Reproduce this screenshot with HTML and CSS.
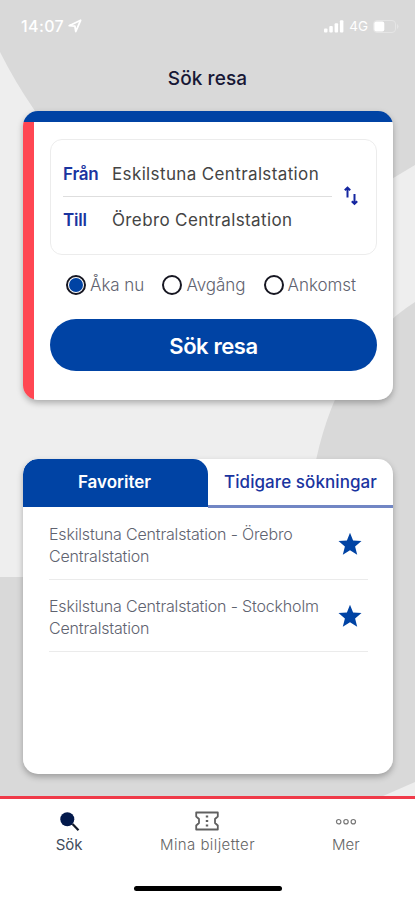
FILE: index.html
```html
<!DOCTYPE html>
<html lang="sv">
<head>
<meta charset="utf-8">
<title>Sök resa</title>
<link rel="stylesheet" href="styles.css">
</head>
<body>
<div class="app">
  <svg class="backdrop" viewBox="0 0 415 900" aria-hidden="true">
    <path d="M0 0H415V165L380 186L200 200L90 200L35 111Q15 82 0 52Z"/>
    <path d="M415 302Q340 350 316 460L260 577H0V800H374L415 782Z"/>
  </svg>
  <header class="status">
    <span class="clock">14:07</span>
    <svg class="location" viewBox="0 0 14 14"><path d="M1.2 6.7 12.6 1.3 7.8 12.5 6.9 7.2Z"/></svg>
    <svg class="signal" viewBox="0 0 20 13"><rect y="8.5" width="3.5" height="4" rx="1"/><rect x="5.3" y="6" width="3.5" height="6.5" rx="1"/><rect x="10.6" y="3.3" width="3.5" height="9.2" rx="1"/><rect x="15.9" y="0.3" width="3.5" height="12.2" rx="1"/></svg>
    <span class="network">4G</span>
    <svg class="battery" viewBox="0 0 26 13"><rect class="shell" x="0.5" y="0.5" width="22" height="12" rx="3.5"/><path class="cap" d="M24 4Q27 6.5 24 9Z"/><rect x="1.3" y="1.6" width="10" height="9.8" rx="2"/></svg>
  </header>
  <h1 class="title">Sök resa</h1>
  <main class="content">
    <section class="card search">
      <div class="search-body">
        <div class="stations">
          <div class="fields">
            <div class="field"><span class="field-label">Från</span><span class="field-value">Eskilstuna Centralstation</span></div>
            <div class="field"><span class="field-label">Till</span><span class="field-value">Örebro Centralstation</span></div>
          </div>
          <svg class="swap" viewBox="0 0 16 20"><path d="M4.5 11.5V2M1.8 4.3 4.5 1.6 7.2 4.3M11.5 8V17.5M8.8 15.2 11.5 17.9 14.2 15.2"/></svg>
        </div>
        <div class="times">
          <span class="time"><i class="radio checked"></i><span>Åka nu</span></span>
          <span class="time"><i class="radio"></i><span>Avgång</span></span>
          <span class="time"><i class="radio"></i><span>Ankomst</span></span>
        </div>
        <button class="submit">Sök resa</button>
      </div>
    </section>
    <section class="card saved">
      <div class="tabs">
        <div class="tab active">Favoriter</div>
        <div class="tab">Tidigare sökningar</div>
      </div>
      <ul class="routes">
        <li><span class="route">Eskilstuna Centralstation - Örebro<br>Centralstation</span><svg class="star" viewBox="0 0 24 24"><path d="M12 .8 15.1 8.5 23.5 9 17.1 14.4 19.2 22.8 12 18.2 4.8 22.8 6.9 14.4.5 9 8.9 8.5Z"/></svg></li>
        <li><span class="route">Eskilstuna Centralstation - Stockholm<br>Centralstation</span><svg class="star" viewBox="0 0 24 24"><path d="M12 .8 15.1 8.5 23.5 9 17.1 14.4 19.2 22.8 12 18.2 4.8 22.8 6.9 14.4.5 9 8.9 8.5Z"/></svg></li>
      </ul>
    </section>
  </main>
  <nav class="nav">
    <div class="nav-items">
      <div class="nav-item current"><svg viewBox="0 0 24 22"><circle cx="10.3" cy="9.2" r="7" fill="#03194b"/><path d="M15.5 14 21.5 20.3" stroke="#111827" stroke-width="2.2"/></svg><span>Sök</span></div>
      <div class="nav-item tickets"><svg viewBox="0 0 24 22"><path d="M1.2 2.5H22.8V6.5L20 9V13L22.8 15.5V19.5H1.2V15.5L4 13V9L1.2 6.5Z" fill="none" stroke="#606060" stroke-width="1.8" stroke-linejoin="round"/><path d="M12 5.5V7.5M12 10V12M12 14.5V16.5" stroke="#606060" stroke-width="2.4"/></svg><span>Mina biljetter</span></div>
      <div class="nav-item"><svg viewBox="0 0 24 22" fill="none" stroke="#777" stroke-width="1.2"><circle cx="4.7" cy="11.7" r="2.2"/><circle cx="12" cy="11.7" r="2.2"/><circle cx="19.3" cy="11.7" r="2.2"/></svg><span>Mer</span></div>
    </div>
    <div class="home"></div>
  </nav>
</div>
</body>
</html>
```
FILE: styles.css
```css
* { box-sizing: border-box; }
body { margin: 0; font-family: Inter, "Liberation Sans", sans-serif; }
.app { position: relative; isolation: isolate; display: flex; flex-direction: column; width: 415px; height: 900px; overflow: hidden; background: #eeeeee; }
.backdrop { position: absolute; inset: 0; z-index: -1; fill: #d9d9d9; }
.status { display: flex; align-items: center; height: 52px; padding: 0 16px 0 21px; color: #fff; fill: #fff; }
.clock { font-size: 16px; font-weight: 500; letter-spacing: .4px; }
.location { width: 14px; height: 14px; margin-left: 4px; fill: none; stroke: #fff; stroke-width: 1.8; stroke-linejoin: round; }
.signal { width: 20px; height: 13px; margin-left: auto; }
.network { margin: 0 5px; font-size: 13.5px; font-weight: 400; }
.battery { width: 26px; height: 13px; }
.shell { fill: none; stroke: #e5e5e5; }
.cap { fill: #e5e5e5; }
.title { margin: 0; height: 59px; line-height: 53px; text-align: center; font-size: 19px; font-weight: 500; letter-spacing: .1px; color: #171735; }
.content { display: flex; flex-direction: column; gap: 59px; height: 685px; padding: 0 22px 0 23px; }
.card { overflow: hidden; border-radius: 15px; background: #fff; box-shadow: 0 3px 6px rgba(0,0,0,.28); }
.search { height: 289px; background: linear-gradient(#0043a4, #0043a4) 0 0 / 100% 11px no-repeat, linear-gradient(90deg, #ff4753 11px, #fff 11px); }
.search-body { padding: 28px 16px 0 27px; }
.stations { display: flex; justify-content: space-between; height: 116px; padding: 12px 17px 0 12px; border: 1px solid #ececec; border-radius: 12px; }
.fields { width: 269px; }
.field { display: flex; align-items: center; height: 45px; }
.field:first-child { border-bottom: 1px solid #dedede; }
.field-label { width: 49px; font-size: 17px; font-weight: 600; letter-spacing: -.2px; color: #1a34a0; }
.field-value { font-size: 17px; letter-spacing: .37px; color: #444; }
.swap { width: 16px; height: 20px; margin-top: 34px; fill: none; stroke: #1526a0; stroke-width: 2; }
.times { display: flex; height: 64px; padding: 0 21px 4px 16px; align-items: center; justify-content: space-between; }
.time { display: flex; align-items: center; gap: 4px; font-size: 17px; font-weight: 300; letter-spacing: -.05px; color: #5f6370; }
.radio { width: 20px; height: 20px; border: 2px solid #171722; border-radius: 50%; }
.checked { padding: 1px; background: #0043a4 content-box; }
.submit { display: block; width: 327px; height: 52px; padding: 1px 0 0; border: 0; border-radius: 26px; background: #0043a4; color: #fff; font: 600 22px Inter, sans-serif; letter-spacing: -.4px; }
.saved { height: 315px; }
.tabs { display: flex; height: 49px; }
.tab { display: flex; align-items: center; justify-content: center; width: 185px; padding-bottom: 1px; border-bottom: 3px solid #7186c4; font-size: 17px; font-weight: 500; letter-spacing: .08px; color: #1a34a0; white-space: nowrap; }
.active { height: 48px; padding: 0 2px 2px 0; border-bottom: 0; border-radius: 15px 15px 0 0; background: #0043a4; color: #fff; font-weight: 600; letter-spacing: 0; }
.routes { margin: 0; padding: 0 25px 0 26px; list-style: none; }
.routes li { display: flex; justify-content: space-between; height: 72px; padding: 15px 6px 0 0; border-bottom: 1px solid #ebebeb; }
.route { font-size: 16px; line-height: 22px; font-weight: 300; letter-spacing: -.17px; color: #5f6370; white-space: nowrap; }
.star { width: 24px; height: 24px; margin-top: 9px; fill: #0043a4; }
.nav { height: 104px; border-top: 3px solid #f03a49; background: #fff; }
.nav-items { display: grid; grid-template-columns: repeat(3, 1fr); height: 87px; padding-top: 11px; }
.nav-item { display: flex; flex-direction: column; align-items: center; gap: 2px; font-size: 15px; line-height: 22px; font-weight: 300; color: #666; }
.nav-item svg { width: 24px; height: 22px; }
.tickets { letter-spacing: .42px; }
.current { color: #414c5c; font-weight: 400; }
.home { width: 148px; height: 5px; margin: 0 auto; border-radius: 3px; background: #000; }
```
